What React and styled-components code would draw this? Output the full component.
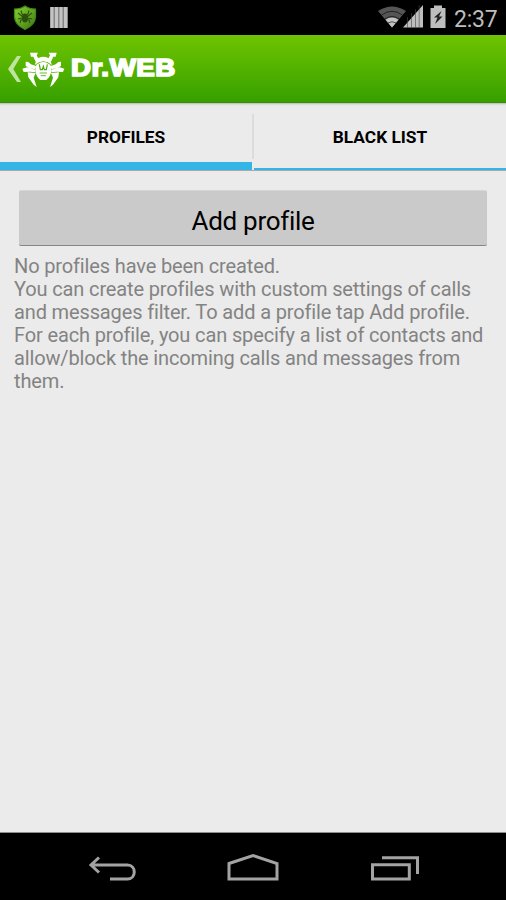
import styled, { createGlobalStyle } from "styled-components";

const lines = [
  "No profiles have been created.",
  "You can create profiles with custom settings of calls",
  "and messages filter. To add a profile tap Add profile.",
  "For each profile, you can specify a list of contacts and",
  "allow/block the incoming calls and messages from",
  "them.",
];

const App = () => {
  return (
    <Screen>
      <GlobalStyle />
      <StatusBar>
        <Notifications>
          <ShieldIcon />
          <BarsIcon />
        </Notifications>
        <SystemIcons>
          <WifiIcon />
          <SignalIcon />
          <BatteryIcon />
          <Clock>2:37</Clock>
        </SystemIcons>
      </StatusBar>
      <Header>
        <BackIcon />
        <SpiderLogo />
        <Brand>Dr.WEB</Brand>
      </Header>
      <Tabs>
        <Tab $active>PROFILES</Tab>
        <Divider />
        <Tab>BLACK LIST</Tab>
      </Tabs>
      <Content>
        <AddButton>Add profile</AddButton>
        <Message>
          {lines.map((line) => (
            <Line key={line}>{line}</Line>
          ))}
        </Message>
      </Content>
      <NavBar>
        <svg width="506" height="67" viewBox="0 0 506 67" fill="none" stroke="#a3a3a3" strokeWidth="3">
          <path d="M99 24.5L91 32L99 39.5M91 32H127.5C136.500 32 136.500 46 127.500 46H110" />
          <path d="M229 30.500L253 22.500L277 30.500V46H229Z" />
          <path d="M372.500 31.800H409.300V46H372.500ZM382 24.800H417.500V41" />
        </svg>
      </NavBar>
    </Screen>
  );
};

export default App;

const ShieldIcon = () => (
  <svg width="24" height="26" viewBox="0 0 24 26">
    <defs>
      <linearGradient id="shield" x1="0" y1="0" x2="1" y2="1">
        <stop offset="0" stopColor="#86cc30" />
        <stop offset="0.5" stopColor="#66a622" />
        <stop offset="1" stopColor="#3d7315" />
      </linearGradient>
    </defs>
    <path
      d="M12 1Q16 4 22.500 4V12Q22 20 12 24.500Q2 20 1.500 12V4Q8 4 12 1Z"
      fill="url(#shield)"
      stroke="#3c8c16"
      strokeWidth="1.200"
    />
    <g stroke="#2a520c" strokeWidth="1.100" fill="none">
      <path d="M8 5.500L9 9L12 11L15 9L16 5.500M5 8L7 9.500L10 12M19 8L17 9.500L14 12M5 14L9 13M19 14L15 13M7 18L8 15L11 14M17 18L16 15L13 14" />
      <ellipse cx="12" cy="13" rx="2.400" ry="4" fill="#2b500c" />
    </g>
  </svg>
);

const BarsIcon = () => (
  <svg width="18" height="22" viewBox="0 0 18 22">
    <path d="M0 0h18v21h-18z" fill="#858585" />
    <path d="M.5 0h3v21h-3zM5 0h3v21h-3zM9.500 0h3v21h-3zM14 0h3v21h-3z" fill="#c4c4c4" />
  </svg>
);

const WifiIcon = () => (
  <svg width="28" height="22" viewBox="0 0 28 22">
    <path d="M0 5Q14 -4 28 5L14 21.500Z" fill="#555" />
    <path d="M7.500 13.800Q14 9 20.500 13.800L14 21.500Z" fill="#c4c4c4" />
    <path d="M3.500 9Q14 1.500 24.500 9M6.800 13Q14 8 21.200 13M10 17Q14 14.500 18 17" fill="none" stroke="#000" strokeWidth=".6" />
  </svg>
);

const SignalIcon = () => (
  <svg width="20" height="23" viewBox="0 0 20 23">
    <path d="M20 0V22.500H0Z" fill="#bebebe" />
    <path d="M4.500 12V23M8.500 8V23M12.500 4V23M16.200 0V23" stroke="#444" strokeWidth=".6" />
  </svg>
);

const BatteryIcon = () => (
  <svg width="16" height="23" viewBox="0 0 16 23">
    <path d="M4 .5H12V3H15.500V23H.5V3H4Z" fill="#bebebe" />
    <path d="M11.500 6L4 12.500H7.500L5 19L12.500 11.500H9Z" fill="#222" />
  </svg>
);

const BackIcon = () => (
  <svg width="14" height="26" viewBox="0 0 14 26">
    <path d="M9 0H13L5.300 13L13 26H9L0 13Z" fill="#bfe3a0" />
  </svg>
);

const legs =
  "M36 17H60L56 25L62 37L53 44L46 29L39 29ZM23 44L31 45L39 52L54 57L52 67L34 63L23 57ZM13 65L27 61L52 68V76L36 74L17 75ZM29 76L53 78L47 92L56 120L47 113L31 91Z";

const SpiderLogo = () => (
  <svg width="50" height="44" viewBox="0 0 150 132">
    <g fill="#fff">
      <path d={legs} />
      <path d={legs} transform="matrix(-1 0 0 1 152 0)" />
      <path d="M61 33Q76 25 91 33Q99 41 102 54Q89 43 76 43Q63 43 50 54Q53 41 61 33Z" />
      <path d="M76 45Q90 46 99 57L100 72Q97 91 85 99H67Q55 91 52 72L53 57Q62 46 76 45Z" />
    </g>
    <g fill="none" stroke="#4aad06">
      <path d="M64 52L67 68H73L76 58L79 68H85L88 52" strokeWidth="3.500" />
      <path d="M65 78H87M68 86H84" strokeWidth="2.500" />
    </g>
  </svg>
);

const GlobalStyle = createGlobalStyle`
  * {
    box-sizing: border-box;
  }

  body {
    margin: 0;
    background-color: #ebebeb;
    font-family: Roboto, sans-serif;
  }
`;

const Screen = styled.div`
  width: 506px;
  height: 900px;
  display: flex;
  flex-direction: column;
  overflow: hidden;
`;

const StatusBar = styled.div`
  height: 35px;
  flex-shrink: 0;
  display: flex;
  justify-content: space-between;
  background-color: #000;
`;

const Notifications = styled.div`
  display: flex;
  align-items: flex-start;
  gap: 13px;
  padding: 5px 0 0 13px;

  svg + svg {
    margin-top: 2px;
  }
`;

const SystemIcons = styled.div`
  display: flex;
  align-items: flex-start;
  padding: 5px 9px 0 0;

  svg {
    flex-shrink: 0;
  }

  svg:nth-of-type(1) {
    margin-top: 1px;
  }

  svg:nth-of-type(2) {
    margin-left: -3px;
  }

  svg:nth-of-type(3) {
    margin-left: 7px;
  }
`;

const Clock = styled.div`
  width: 43px;
  margin-left: 8px;
  padding-top: 1px;
  color: #bebebe;
  font-size: 23px;
  letter-spacing: -0.2px;
  line-height: 27px;
  white-space: nowrap;
`;

const Header = styled.div`
  height: 68px;
  flex-shrink: 0;
  display: flex;
  align-items: center;
  padding-left: 8px;
  background: linear-gradient(#70c400, #36a000);
  border-bottom: 1px solid #338f08;

  svg + svg {
    margin-left: -4px;
  }
`;

const Brand = styled.div`
  margin: -1px 0 0 3px;
  color: #fff;
  font-family: "Liberation Sans", Arial, sans-serif;
  font-size: 24.5px;
  font-weight: 700;
  letter-spacing: 0.5px;
  -webkit-text-stroke: 1.7px #fff;
  transform: scaleX(1.13);
  transform-origin: left;
`;

const Tabs = styled.div`
  height: 68px;
  flex-shrink: 0;
  display: flex;
  background: linear-gradient(#b0b0b0 0, #d8d8d8 1px, #ebebeb 3px);
  border-bottom: 1px solid #a9a9a9;
`;

const Tab = styled.div`
  flex: 1;
  display: flex;
  justify-content: center;
  align-items: center;
  padding-top: ${({ $active }) => ($active ? "9px" : "3px")};
  border-bottom: ${({ $active }) => ($active ? "8px" : "2px")} solid #33b5e5;
  color: #000;
  font-size: 17.3px;
  font-weight: 700;
`;

const Divider = styled.div`
  width: 2px;
  height: 45px;
  margin-top: 11px;
  background-color: #dcdcdc;
`;

const Content = styled.div`
  flex: 1;
  padding: 19px 14px 0;
  background-color: #ebebeb;
  border-bottom: 1px solid #8c8c8c;
`;

const AddButton = styled.button`
  display: flex;
  justify-content: center;
  align-items: center;
  width: 468px;
  height: 56px;
  margin: 0 5px;
  padding: 6px 0 0;
  border: none;
  border-top: 1px solid #d6d6d6;
  border-bottom: 1px solid #868686;
  border-radius: 2px;
  background-color: #cacaca;
  color: #000;
  font-family: Roboto, sans-serif;
  font-size: 26px;
  letter-spacing: -0.3px;
`;

const Message = styled.div`
  padding-top: 9px;
`;

const Line = styled.div`
  color: #838383;
  font-size: 20px;
  letter-spacing: -0.135px;
  line-height: 23px;
  white-space: nowrap;
`;

const NavBar = styled.div`
  height: 67px;
  flex-shrink: 0;
  background-color: #000;
`;
